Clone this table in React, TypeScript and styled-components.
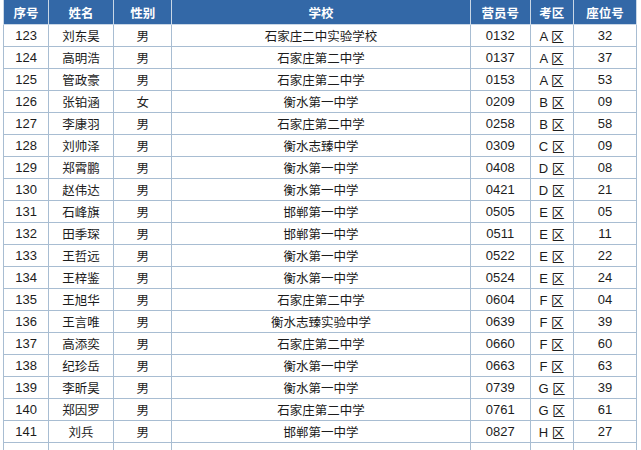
import React from 'react';
import styled, { createGlobalStyle } from 'styled-components';

const GlobalStyle = createGlobalStyle`
  html, body {
    margin: 0;
    padding: 0;
    background: #ffffff;
  }
  body {
    font-family: 'Liberation Sans', 'Noto Sans CJK SC', sans-serif;
  }
`;

const Page = styled.div`
  width: 641px;
  height: 450px;
  overflow: hidden;
  padding-left: 3px;
  box-sizing: border-box;
`;

const Table = styled.table`
  border-collapse: collapse;
  table-layout: fixed;
  width: 634px;
  color: #1c1c1c;
`;

const Head = styled.th`
  height: 24px;
  padding: 0;
  background: #3368a7;
  color: #ffffff;
  font-family: 'Noto Sans CJK SC', sans-serif;
  font-weight: bold;
  font-size: 12.5px;
  text-align: center;
  border: 1px solid #c9d7e6;
  border-top: none;
`;

const Cell = styled.td<{ $cjk?: boolean }>`
  height: 21px;
  padding: 0;
  text-align: center;
  border: 1px solid #a8bdd2;
  font-family: ${(p) =>
    p.$cjk
      ? "'Noto Sans CJK SC', sans-serif"
      : "'Liberation Sans Narrow', 'Liberation Sans', 'Noto Sans CJK SC', sans-serif"};
  font-size: ${(p) => (p.$cjk ? '12.5px' : '13px')};
  white-space: nowrap;
`;

const widths = [45, 65, 58, 298, 60, 43, 63];
const heads = ['序号', '姓名', '性别', '学校', '营员号', '考区', '座位号'];

const rows: string[][] = [
  ['123', '刘东昊', '男', '石家庄二中实验学校', '0132', 'A', '32'],
  ['124', '高明浩', '男', '石家庄第二中学', '0137', 'A', '37'],
  ['125', '管政豪', '男', '石家庄第二中学', '0153', 'A', '53'],
  ['126', '张铂涵', '女', '衡水第一中学', '0209', 'B', '09'],
  ['127', '李康羽', '男', '石家庄第二中学', '0258', 'B', '58'],
  ['128', '刘帅泽', '男', '衡水志臻中学', '0309', 'C', '09'],
  ['129', '郑霄鹏', '男', '衡水第一中学', '0408', 'D', '08'],
  ['130', '赵伟达', '男', '衡水第一中学', '0421', 'D', '21'],
  ['131', '石峰旗', '男', '邯郸第一中学', '0505', 'E', '05'],
  ['132', '田季琛', '男', '邯郸第一中学', '0511', 'E', '11'],
  ['133', '王哲远', '男', '衡水第一中学', '0522', 'E', '22'],
  ['134', '王梓鉴', '男', '衡水第一中学', '0524', 'E', '24'],
  ['135', '王旭华', '男', '石家庄第二中学', '0604', 'F', '04'],
  ['136', '王言唯', '男', '衡水志臻实验中学', '0639', 'F', '39'],
  ['137', '高添奕', '男', '石家庄第二中学', '0660', 'F', '60'],
  ['138', '纪珍岳', '男', '衡水第一中学', '0663', 'F', '63'],
  ['139', '李昕昊', '男', '衡水第一中学', '0739', 'G', '39'],
  ['140', '郑因罗', '男', '石家庄第二中学', '0761', 'G', '61'],
  ['141', '刘兵', '男', '邯郸第一中学', '0827', 'H', '27'],
];

const App: React.FC = () => {
  return (
    <Page>
      <GlobalStyle />
      <Table>
        <colgroup>
          {widths.map((w, i) => (
            <col key={i} style={{ width: w }} />
          ))}
        </colgroup>
        <thead>
          <tr>
            {heads.map((h) => (
              <Head key={h}>{h}</Head>
            ))}
          </tr>
        </thead>
        <tbody>
          {rows.map((r) => (
            <tr key={r[0]}>
              <Cell>{r[0]}</Cell>
              <Cell $cjk>{r[1]}</Cell>
              <Cell $cjk>{r[2]}</Cell>
              <Cell $cjk>{r[3]}</Cell>
              <Cell>{r[4]}</Cell>
              <Cell>{r[5]} 区</Cell>
              <Cell>{r[6]}</Cell>
            </tr>
          ))}
          <tr>
            <Cell />
            <Cell />
            <Cell />
            <Cell />
            <Cell />
            <Cell />
            <Cell />
          </tr>
        </tbody>
      </Table>
    </Page>
  );
};

export default App;
